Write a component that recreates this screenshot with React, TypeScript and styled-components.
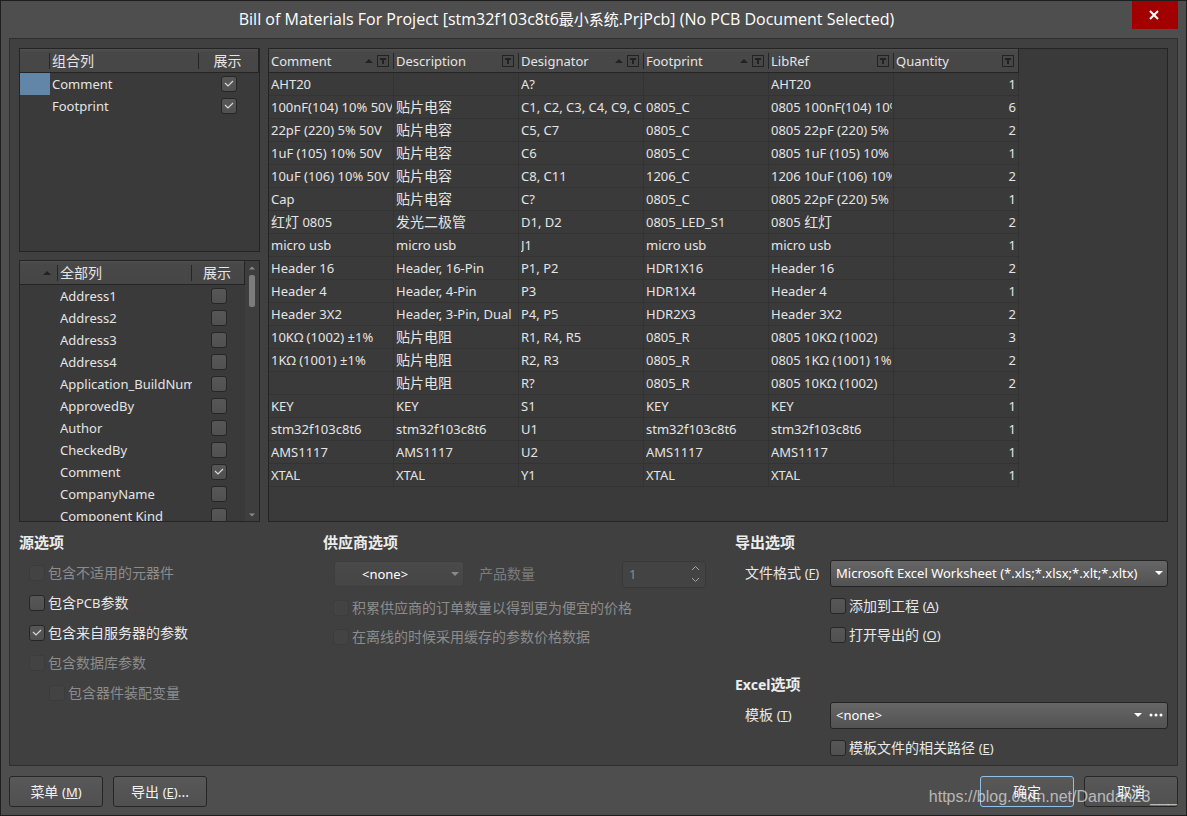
import React, { useState } from "react";
import styled, { createGlobalStyle } from "styled-components";

const Global = createGlobalStyle`
  *, *::before, *::after { box-sizing: border-box; }
  body { margin: 0; background: #4d4d4d; }
  body, button, input, select {
    font-family: "Noto Sans", "Noto Sans CJK SC", sans-serif;
    font-size: 13px;
    line-height: 20px;
    color: #e4e4e4;
  }
`;

const Window = styled.div`
  position: relative;
  display: flex;
  flex-direction: column;
  height: 100vh;
  min-height: 700px;
  padding: 0 8px 8px;
  border: 1px solid #1e1e1e;
  background: #4e4e4e;
`;

const TitleBar = styled.header`
  display: grid;
  grid-template-columns: 46px 1fr 46px;
  height: 37px;
  flex: none;
`;

const Title = styled.h1`
  grid-column: 2;
  margin: 0;
  padding: 6px 54px 0 0;
  text-align: center;
  white-space: nowrap;
  font-family: "Open Sans", "Noto Sans CJK SC", sans-serif;
  font-size: 16px;
  line-height: 24px;
  font-weight: 400;
  color: #fff;
`;

const TitleCjk = styled.span`
  font-size: 15px;
`;

const CloseButton = styled.button`
  display: grid;
  place-items: center;
  height: 28px;
  padding: 0 2px 0 0;
  border: 0;
  background: #a20000;
`;

const Body = styled.main`
  display: flex;
  flex-direction: column;
  flex: 1;
  min-height: 0;
  padding: 9px;
  border: 1px solid #2e2e2e;
  background: #404040;
`;

const Lists = styled.section`
  display: flex;
  gap: 8px;
  flex: 1;
  min-height: 0;
`;

const Side = styled.div`
  display: flex;
  flex-direction: column;
  width: 241px;
  flex: none;
`;

const Box = styled.div<{ $h?: number }>`
  display: flex;
  overflow: hidden;
  min-height: 0;
  min-width: 0;
  flex: ${(p) => (p.$h ? `0 0 ${p.$h}px` : "1")};
  border: 1px solid #242424;
  background: #3a3a3a;
`;

const Splitter = styled.div`
  height: 8px;
  flex: none;
`;

const ListPane = styled.div`
  flex: 1;
  min-width: 0;
  overflow: hidden;
`;

const Table = styled.table<{ $w?: number }>`
  table-layout: fixed;
  border-collapse: separate;
  border-spacing: 0;
  width: ${(p) => (p.$w ? `${p.$w}px` : "100%")};
`;

const Head = styled.th<{ $small?: boolean }>`
  height: 24px;
  padding: 0;
  font-weight: 400;
  text-align: left;
  font-size: ${(p) => (p.$small ? 13 : 14)}px;
  border-bottom: 1px solid #242424;
  background: linear-gradient(#505050, #484848 3px, #464646);
  &:last-child { border-right: 1px solid #242424; }
`;

const HeadInner = styled.div<{ $line?: boolean; $end?: boolean; $center?: boolean }>`
  display: flex;
  align-items: center;
  justify-content: ${(p) => (p.$end ? "flex-end" : p.$center ? "center" : "flex-start")};
  gap: 4px;
  height: 16px;
  padding: 0 ${(p) => (p.$end ? 6 : 4)}px 0 2px;
  border-right: ${(p) => (p.$line ? "1px solid #262626" : "0")};
`;

const HeadText = styled.span`
  flex: 1;
  line-height: 20px;
`;

const SideCell = styled.td<{ $center?: boolean; $selected?: boolean }>`
  height: 22px;
  padding: 0 0 0 ${(p) => (p.$center ? 0 : 2)}px;
  overflow: hidden;
  white-space: nowrap;
  background: ${(p) => (p.$selected ? "#6286a7" : "transparent")};
  > span { margin: 0 auto; }
`;

const GridCell = styled.td<{ $num?: boolean }>`
  height: 23px;
  padding: 0 ${(p) => (p.$num ? 2 : 1)}px 0 2px;
  overflow: hidden;
  white-space: nowrap;
  text-align: ${(p) => (p.$num ? "right" : "left")};
  border-right: 1px solid #333;
  border-bottom: 1px solid #333;
`;

const CellText = styled.div`
  overflow: hidden;
  height: 20px;
  line-height: 20px;
`;

const Cjk = styled.span`
  font-size: 14px;
`;

const Scroll = styled.div`
  display: flex;
  flex-direction: column;
  align-items: center;
  width: 14px;
  flex: none;
  padding: 5px 0 4px;
  background: #3e3e3e;
`;

const Thumb = styled.div`
  width: 6px;
  height: 32px;
  margin: 5px 0 auto;
  border-radius: 2px;
  background: #7c7c7c;
`;

const CheckWrap = styled.span`
  display: grid;
  width: 16px;
  height: 16px;
  flex: none;
  > * { grid-area: 1 / 1; }
  > svg { pointer-events: none; }
`;

const CheckInput = styled.input`
  appearance: none;
  width: 16px;
  height: 16px;
  margin: 0;
  border: 1px solid #262626;
  border-radius: 3px;
  background: linear-gradient(#575757, #505050);
  &:disabled {
    border-color: #3c3c3c;
    background: #434343;
  }
`;

const Options = styled.section`
  display: grid;
  grid-template-columns: 304px 412px 1fr;
  height: 234px;
  flex: none;
  padding-top: 8px;
`;

const GroupTitle = styled.h2`
  margin: 0;
  font-size: 15px;
  line-height: 24px;
  height: 25px;
  font-weight: 700;
  color: #ececec;
`;

const ExcelTitle = styled(GroupTitle)`
  margin-top: 23px;
`;

const TitleLatin = styled.span`
  font-size: 14px;
`;

const Rows = styled.div<{ $pitch: number; $left?: number; $top?: number }>`
  display: grid;
  grid-auto-rows: ${(p) => p.$pitch}px;
  align-items: center;
  justify-items: start;
  padding-left: ${(p) => p.$left ?? 10}px;
  padding-top: ${(p) => p.$top ?? 0}px;
`;

const CheckLabel = styled.label<{ $indent?: boolean; $off?: boolean }>`
  display: flex;
  align-items: center;
  gap: 3px;
  font-size: 14px;
  white-space: nowrap;
  margin-left: ${(p) => (p.$indent ? 20 : 0)}px;
  color: ${(p) => (p.$off ? "#8c8c8c" : "#e8e8e8")};
`;

const Field = styled.div`
  display: grid;
  grid-template-columns: 85px 1fr;
  align-items: center;
  height: 36px;
  padding-left: 10px;
`;

const FieldLabel = styled.label`
  font-size: 14px;
  white-space: nowrap;
  color: #e8e8e8;
`;

const Combo = styled.div<{ $off?: boolean; $w?: number }>`
  display: grid;
  grid-template-columns: 1fr auto;
  grid-template-rows: 100%;
  align-items: center;
  width: ${(p) => (p.$w ? `${p.$w}px` : "auto")};
  height: ${(p) => (p.$off ? 26 : 27)}px;
  border: 1px solid ${(p) => (p.$off ? "#3e3e3e" : "#242424")};
  border-radius: 3px;
  background: ${(p) =>
    p.$off ? "linear-gradient(#4a4a4a, #454545)" : "linear-gradient(#666, #525252)"};
`;

const Select = styled.select<{ $indent?: boolean }>`
  grid-area: 1 / 1 / 2 / 3;
  appearance: none;
  width: 100%;
  height: 100%;
  margin: 0;
  padding: 0 20px 0 ${(p) => (p.$indent ? 27 : 5)}px;
  border: 0;
  background: transparent;
  color: #fff;
  opacity: 1;
`;

const ComboIcons = styled.span`
  grid-area: 1 / 2;
  display: flex;
  align-items: center;
  gap: 7px;
  padding-right: 4px;
  pointer-events: none;
`;

const MoreButton = styled.button`
  display: flex;
  padding: 0;
  border: 0;
  background: none;
  pointer-events: auto;
`;

const VendorRow = styled.div`
  display: flex;
  align-items: center;
  height: 38px;
  padding-left: 11px;
`;

const VendorLabel = styled(FieldLabel)`
  width: 143px;
  margin-left: 15px;
  color: #7c7c7c;
`;

const Spin = styled.div`
  display: flex;
  align-items: center;
  width: 84px;
  height: 27px;
  padding-right: 5px;
  border: 1px solid #383838;
  border-radius: 3px;
  background: #434343;
`;

const SpinInput = styled.input`
  flex: 1;
  min-width: 0;
  padding: 0 6px;
  border: 0;
  background: none;
  color: #8c8c8c;
`;

const Footer = styled.footer`
  display: flex;
  gap: 10px;
  padding-top: 10px;
  flex: none;
`;

const Spacer = styled.div`
  flex: 1;
`;

const Button = styled.button<{ $primary?: boolean }>`
  width: 94px;
  height: 31px;
  padding: 0;
  font-size: 14px;
  color: #f2f2f2;
  border: 1px solid ${(p) => (p.$primary ? "#8fc1ea" : "#262626")};
  border-radius: 3px;
  background: linear-gradient(#585858, #505050);
`;

const Watermark = styled.div`
  position: absolute;
  right: 9px;
  bottom: 8px;
  font-family: "Liberation Sans", Arial, sans-serif;
  font-size: 16px;
  line-height: 20px;
  color: rgba(255, 255, 255, 0.6);
  pointer-events: none;
`;

const Small = styled.span`
  font-size: 13px;
`;

const Triangle = ({ up, color = "#222", w = 8, h = 4 }: { up?: boolean; color?: string; w?: number; h?: number }) => (
  <svg width={w} height={h} viewBox="0 0 8 4" aria-hidden="true">
    <path d={up ? "M0 4 4 0 8 4Z" : "M0 0 4 4 8 0Z"} fill={color} />
  </svg>
);

const FilterIcon = () => (
  <svg width="12" height="12" viewBox="0 0 12 12" aria-hidden="true">
    <rect x="0.5" y="0.5" width="11" height="11" fill="none" stroke="#222" />
    <path d="M3 3h6v2H7v4H5V5H3Z" fill="#222" />
  </svg>
);

const Check = ({ on, disabled, label }: { on?: boolean; disabled?: boolean; label?: string }) => {
  const [checked, setChecked] = useState(!!on);
  return (
    <CheckWrap>
      <CheckInput
        type="checkbox"
        checked={checked}
        disabled={disabled}
        aria-label={label}
        onChange={(e) => setChecked(e.target.checked)}
      />
      {checked && (
        <svg width="16" height="16" viewBox="0 0 16 16" aria-hidden="true">
          <path d="M4 7 7 10 12 5" fill="none" stroke="#d8d8d8" strokeWidth="1.200" />
        </svg>
      )}
    </CheckWrap>
  );
};

/* Chinese runs are set one pixel larger than the Latin text around them. */
const Mixed = ({ children }: { children: string }) => (
  <>
    {children.split(/([\u4e00-\u9fff]+)/).map((part, i) =>
      i % 2 ? <Cjk key={i}>{part}</Cjk> : <React.Fragment key={i}>{part}</React.Fragment>
    )}
  </>
);

const Key = ({ children }: { children: string }) => (
  <>
    {" "}
    <Small>
      (<u>{children}</u>)
    </Small>
  </>
);

const columns = [
  { name: "Comment", sorted: true },
  { name: "Description", sorted: false },
  { name: "Designator", sorted: true },
  { name: "Footprint", sorted: true },
  { name: "LibRef", sorted: false },
  { name: "Quantity", sorted: false },
];

const parts = [
  ["AHT20", "", "A?", "", "AHT20", "1"],
  ["100nF(104) 10% 50V", "贴片电容", "C1, C2, C3, C4, C9, C10", "0805_C", "0805 100nF(104) 10%", "6"],
  ["22pF (220) 5% 50V", "贴片电容", "C5, C7", "0805_C", "0805 22pF (220) 5%", "2"],
  ["1uF (105) 10% 50V", "贴片电容", "C6", "0805_C", "0805 1uF (105) 10%", "1"],
  ["10uF (106) 10% 50V", "贴片电容", "C8, C11", "1206_C", "1206 10uF (106) 10%", "2"],
  ["Cap", "贴片电容", "C?", "0805_C", "0805 22pF (220) 5%", "1"],
  ["红灯 0805", "发光二极管", "D1, D2", "0805_LED_S1", "0805 红灯", "2"],
  ["micro usb", "micro usb", "J1", "micro usb", "micro usb", "1"],
  ["Header 16", "Header, 16-Pin", "P1, P2", "HDR1X16", "Header 16", "2"],
  ["Header 4", "Header, 4-Pin", "P3", "HDR1X4", "Header 4", "1"],
  ["Header 3X2", "Header, 3-Pin, Dual", "P4, P5", "HDR2X3", "Header 3X2", "2"],
  ["10KΩ (1002) ±1%", "贴片电阻", "R1, R4, R5", "0805_R", "0805 10KΩ (1002)", "3"],
  ["1KΩ (1001) ±1%", "贴片电阻", "R2, R3", "0805_R", "0805 1KΩ (1001) 1%", "2"],
  ["", "贴片电阻", "R?", "0805_R", "0805 10KΩ (1002)", "2"],
  ["KEY", "KEY", "S1", "KEY", "KEY", "1"],
  ["stm32f103c8t6", "stm32f103c8t6", "U1", "stm32f103c8t6", "stm32f103c8t6", "1"],
  ["AMS1117", "AMS1117", "U2", "AMS1117", "AMS1117", "1"],
  ["XTAL", "XTAL", "Y1", "XTAL", "XTAL", "1"],
];

const allColumns = [
  "Address1",
  "Address2",
  "Address3",
  "Address4",
  "Application_BuildNumber",
  "ApprovedBy",
  "Author",
  "CheckedBy",
  "Comment",
  "CompanyName",
  "Component Kind",
];

const FirstCol = styled.col<{ $w: number }>`
  width: ${(p) => p.$w}px;
`;

export default function App() {
  return (
    <>
      <Global />
      <Window>
        <TitleBar>
          <Title>
            Bill of Materials For Project [stm32f103c8t6<TitleCjk>最小系统</TitleCjk>.PrjPcb] (No PCB Document
            Selected)
          </Title>
          <CloseButton type="button" aria-label="Close">
            <svg width="10" height="10" viewBox="0 0 10 10" aria-hidden="true">
              <path d="M1 1 9 9M9 1 1 9" stroke="#fff" strokeWidth="2" />
            </svg>
          </CloseButton>
        </TitleBar>

        <Body>
          <Lists>
            <Side>
              <Box $h={204}>
                <ListPane>
                  <Table>
                    <colgroup>
                      <FirstCol $w={30} />
                      <col />
                      <FirstCol $w={60} />
                    </colgroup>
                    <thead>
                      <tr>
                        <Head>
                          <HeadInner $line />
                        </Head>
                        <Head>
                          <HeadInner $line>组合列</HeadInner>
                        </Head>
                        <Head>
                          <HeadInner $center>展示</HeadInner>
                        </Head>
                      </tr>
                    </thead>
                    <tbody>
                      {["Comment", "Footprint"].map((name, i) => (
                        <tr key={name}>
                          <SideCell $selected={i === 0} />
                          <SideCell>
                            <CellText>{name}</CellText>
                          </SideCell>
                          <SideCell $center>
                            <Check on label={name} />
                          </SideCell>
                        </tr>
                      ))}
                    </tbody>
                  </Table>
                </ListPane>
              </Box>
              <Splitter />
              <Box>
                <ListPane>
                  <Table>
                    <colgroup>
                      <FirstCol $w={38} />
                      <col />
                      <FirstCol $w={53} />
                    </colgroup>
                    <thead>
                      <tr>
                        <Head>
                          <HeadInner $line $end>
                            <Triangle up />
                          </HeadInner>
                        </Head>
                        <Head>
                          <HeadInner $line>全部列</HeadInner>
                        </Head>
                        <Head>
                          <HeadInner $center>展示</HeadInner>
                        </Head>
                      </tr>
                    </thead>
                    <tbody>
                      {allColumns.map((name) => (
                        <tr key={name}>
                          <SideCell />
                          <SideCell>
                            <CellText>{name}</CellText>
                          </SideCell>
                          <SideCell $center>
                            <Check on={name === "Comment"} label={name} />
                          </SideCell>
                        </tr>
                      ))}
                    </tbody>
                  </Table>
                </ListPane>
                <Scroll>
                  <Triangle up color="#8a8a8a" w={6} h={4} />
                  <Thumb />
                  <Triangle color="#8a8a8a" w={6} h={4} />
                </Scroll>
              </Box>
            </Side>

            <Box>
              <ListPane>
                <Table $w={750}>
                  <thead>
                    <tr>
                      {columns.map((c, i) => (
                        <Head key={c.name} $small>
                          <HeadInner $line={i < columns.length - 1}>
                            <HeadText>{c.name}</HeadText>
                            {c.sorted && <Triangle up />}
                            <FilterIcon />
                          </HeadInner>
                        </Head>
                      ))}
                    </tr>
                  </thead>
                  <tbody>
                    {parts.map((row, r) => (
                      <tr key={r}>
                        {row.map((text, i) => (
                          <GridCell key={i} $num={i === 5}>
                            <CellText>
                              <Mixed>{text}</Mixed>
                            </CellText>
                          </GridCell>
                        ))}
                      </tr>
                    ))}
                  </tbody>
                </Table>
              </ListPane>
            </Box>
          </Lists>

          <Options>
            <div>
              <GroupTitle>源选项</GroupTitle>
              <Rows $pitch={30} $top={3}>
                <CheckLabel $off>
                  <Check disabled />
                  包含不适用的元器件
                </CheckLabel>
                <CheckLabel>
                  <Check />
                  <span>
                    包含<Small>PCB</Small>参数
                  </span>
                </CheckLabel>
                <CheckLabel>
                  <Check on />
                  包含来自服务器的参数
                </CheckLabel>
                <CheckLabel $off>
                  <Check disabled />
                  包含数据库参数
                </CheckLabel>
                <CheckLabel $off $indent>
                  <Check disabled />
                  包含器件装配变量
                </CheckLabel>
              </Rows>
            </div>

            <div>
              <GroupTitle>供应商选项</GroupTitle>
              <VendorRow>
                <Combo $off $w={130}>
                  <Select $indent disabled aria-label="供应商">
                    <option>&lt;none&gt;</option>
                  </Select>
                  <ComboIcons>
                    <Triangle color="#8a8a8a" />
                  </ComboIcons>
                </Combo>
                <VendorLabel htmlFor="quantity">产品数量</VendorLabel>
                <Spin>
                  <SpinInput id="quantity" defaultValue="1" disabled />
                  <svg width="9" height="19" viewBox="0 0 9 19" aria-hidden="true">
                    <path d="M1 5 4.500 1.500 8 5M1 13 4.500 16.500 8 13" fill="none" stroke="#a4a4a4" />
                  </svg>
                </Spin>
              </VendorRow>
              <Rows $pitch={29}>
                <CheckLabel $off>
                  <Check disabled />
                  积累供应商的订单数量以得到更为便宜的价格
                </CheckLabel>
                <CheckLabel $off>
                  <Check disabled />
                  在离线的时候采用缓存的参数价格数据
                </CheckLabel>
              </Rows>
            </div>

            <div>
              <GroupTitle>导出选项</GroupTitle>
              <Field>
                <FieldLabel htmlFor="format">
                  文件格式<Key>F</Key>
                </FieldLabel>
                <Combo>
                  <Select id="format">
                    <option>Microsoft Excel Worksheet (*.xls;*.xlsx;*.xlt;*.xltx)</option>
                  </Select>
                  <ComboIcons>
                    <Triangle color="#fff" />
                  </ComboIcons>
                </Combo>
              </Field>
              <Rows $pitch={29} $left={95}>
                <CheckLabel>
                  <Check />
                  <span>
                    添加到工程<Key>A</Key>
                  </span>
                </CheckLabel>
                <CheckLabel>
                  <Check />
                  <span>
                    打开导出的<Key>O</Key>
                  </span>
                </CheckLabel>
              </Rows>
              <ExcelTitle>
                <TitleLatin>Excel</TitleLatin>选项
              </ExcelTitle>
              <Field>
                <FieldLabel htmlFor="template">
                  模板<Key>T</Key>
                </FieldLabel>
                <Combo>
                  <Select id="template">
                    <option>&lt;none&gt;</option>
                  </Select>
                  <ComboIcons>
                    <Triangle color="#fff" />
                    <MoreButton type="button" aria-label="Browse">
                      <svg width="14" height="4" viewBox="0 0 14 4" aria-hidden="true">
                        <circle cx="2" cy="2" r="1.500" fill="#fff" />
                        <circle cx="7" cy="2" r="1.500" fill="#fff" />
                        <circle cx="12" cy="2" r="1.500" fill="#fff" />
                      </svg>
                    </MoreButton>
                  </ComboIcons>
                </Combo>
              </Field>
              <Rows $pitch={29} $left={95}>
                <CheckLabel>
                  <Check />
                  <span>
                    模板文件的相关路径<Key>E</Key>
                  </span>
                </CheckLabel>
              </Rows>
            </div>
          </Options>
        </Body>

        <Footer>
          <Button type="button">
            菜单<Key>M</Key>
          </Button>
          <Button type="button">
            导出<Key>E</Key>...
          </Button>
          <Spacer />
          <Button type="button" $primary>
            确定
          </Button>
          <Button type="button">取消</Button>
        </Footer>
        <Watermark>https://blog.csdn.net/Dandan23___</Watermark>
      </Window>
    </>
  );
}
